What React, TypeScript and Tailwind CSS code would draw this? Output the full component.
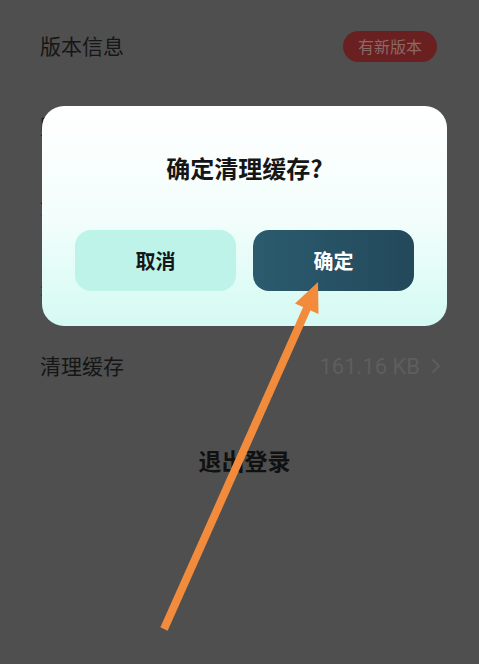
import { ChevronRight } from 'lucide-react'

const cjk = { fontFamily: '"Noto Sans CJK SC", "Noto Sans", sans-serif' }

// 设置页中被弹窗挡住的几行
const hiddenRows = ['账号与安全', '消息通知', '关于我们']

export default function App() {
  return (
    <div className="relative w-[479px] h-[664px] overflow-hidden bg-[#4f4f4f]" style={cjk}>
      {/* 设置列表 */}
      <div className="pt-[6px] px-[40px]">
        <div className="h-[80px] flex items-center justify-between">
          <span className="text-[21px] text-[#161616]">版本信息</span>
          <span className="mr-[2px] h-[31px] w-[94px] flex items-center justify-center rounded-full bg-[#6a1f20] text-[16px] text-[#8a6a66]">
            有新版本
          </span>
        </div>

        {hiddenRows.map(label => (
          <div key={label} className="h-[80px] flex items-center">
            <span className="text-[21px] text-[#161616]">{label}</span>
          </div>
        ))}

        <div className="h-[80px] flex items-center justify-between">
          <span className="text-[21px] text-[#161616]">清理缓存</span>
          <div className="flex items-center gap-[4px] text-[#5e5e5e]">
            <span className="text-[22px]" style={{ fontFamily: 'Roboto, "Noto Sans", sans-serif' }}>
              161.16 KB
            </span>
            <ChevronRight size={24} strokeWidth={1.8} className="-mr-[9px]" />
          </div>
        </div>

        <div className="mt-[37px] flex justify-center">
          <span className="text-[23px] font-bold text-[#111] ml-[10px]">退出登录</span>
        </div>
      </div>

      {/* 确认弹窗 */}
      <div className="absolute left-[42px] top-[106px] w-[405px] h-[220px] rounded-[22px] bg-gradient-to-b from-[#ffffff] via-[#f3fefc] to-[#d4faf3] px-[33px] pt-[48px]">
        <p className="text-center text-[24px] leading-[28px] font-bold text-[#161616]">确定清理缓存?</p>
        <div className="mt-[48px] flex gap-[17px]">
          <button className="flex-1 h-[61px] rounded-[16px] bg-[#bdf3e9] text-[20px] font-bold text-[#161616]">
            取消
          </button>
          <button className="flex-1 h-[61px] rounded-[16px] bg-gradient-to-r from-[#2b5b6e] to-[#23495b] text-[20px] font-bold text-white">
            确定
          </button>
        </div>
      </div>

      {/* 标注箭头 */}
      <svg className="absolute inset-0 pointer-events-none" width="479" height="664" viewBox="0 0 479 664">
        <line x1="164" y1="629" x2="308" y2="306" stroke="#f28b3b" strokeWidth="8" />
        <polygon points="318,282 318.5,314 295,303.5" fill="#f28b3b" />
      </svg>
    </div>
  )
}
